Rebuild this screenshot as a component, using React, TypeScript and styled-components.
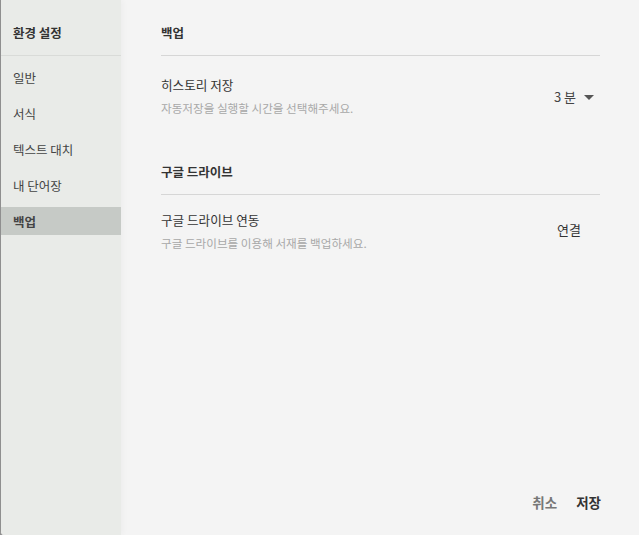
import React from "react";
import styled, { createGlobalStyle } from "styled-components";

const Global = createGlobalStyle`
  html, body { margin: 0; padding: 0; background: #8f8f8f; }
  body { font-family: "Noto Sans CJK KR", "Noto Sans", sans-serif; color: #333; }
  * { box-sizing: border-box; }
`;

const Dialog = styled.div`
  display: flex;
  width: 639px;
  height: 535px;
  background: #f4f4f4;
  border-left: 1px solid #8f8f8f;
  border-bottom-left-radius: 4px;
  overflow: hidden;
`;

const Sidebar = styled.nav`
  width: 120px;
  flex: 0 0 120px;
  background: #e9ebe8;
  display: flex;
  flex-direction: column;
  box-shadow: 2px 0 6px rgba(0, 0, 0, 0.03);
  position: relative;
  z-index: 1;
`;

const SideHeader = styled.div`
  height: 56px;
  padding: 9px 0 0 12px;
  display: flex;
  align-items: center;
  border-bottom: 1px solid #d9dbd8;
  font-size: 12.5px;
  font-weight: 700;
  color: #333;
`;

const SideList = styled.ul`
  list-style: none;
  margin: 7px 0 0;
  padding: 0;
  display: flex;
  flex-direction: column;
  gap: 8px;
`;

const SideItem = styled.li<{ $active?: boolean }>`
  height: 28px;
  display: flex;
  align-items: center;
  padding-left: 12px;
  font-size: 12.5px;
  color: #444;
  font-weight: ${(p) => (p.$active ? 700 : 400)};
  background: ${(p) => (p.$active ? "#c6cac6" : "transparent")};
`;

const Main = styled.main`
  flex: 1;
  display: flex;
  flex-direction: column;
  padding: 0 39px 0 40px;
`;

const SectionHeader = styled.div`
  height: 56px;
  padding-top: 9px;
  display: flex;
  align-items: center;
  border-bottom: 1px solid #d6d6d6;
  font-size: 12.5px;
  font-weight: 700;
  color: #333;
`;

const Row = styled.div<{ $top: number; $bottom: number }>`
  display: flex;
  align-items: center;
  justify-content: space-between;
  padding: ${(p) => p.$top}px 0 ${(p) => p.$bottom}px;
`;

const TextBlock = styled.div`
  display: flex;
  flex-direction: column;
`;

const Label = styled.div`
  font-size: 12.6px;
  line-height: 18px;
  color: #333;
`;

const Desc = styled.div`
  margin-top: 6px;
  font-size: 11.6px;
  line-height: 16px;
  color: #a8a8a8;
`;

const Select = styled.div`
  display: flex;
  align-items: center;
  gap: 8px;
  padding-right: 6px;
  font-size: 13px;
  color: #444;
`;

const Caret = styled.span`
  width: 0;
  height: 0;
  border-left: 5px solid transparent;
  border-right: 5px solid transparent;
  border-top: 5px solid #555;
  margin-top: 2px;
`;

const LinkButton = styled.button`
  background: none;
  border: none;
  padding: 0 19px 0 0;
  margin-top: -3px;
  font: inherit;
  font-size: 13px;
  color: #333;
`;

const Footer = styled.div`
  margin-top: auto;
  display: flex;
  justify-content: flex-end;
  gap: 19px;
  padding: 0 0 23px;
  margin-right: -1px;
`;

const FooterButton = styled.button<{ $primary?: boolean }>`
  background: none;
  border: none;
  padding: 0;
  font-family: inherit;
  font-size: 13.5px;
  line-height: 20px;
  font-weight: 700;
  color: ${(p) => (p.$primary ? "#333" : "#777")};
`;

const navItems = ["일반", "서식", "텍스트 대치", "내 단어장", "백업"];

export default function App() {
  return (
    <>
      <Global />
      <Dialog>
        <Sidebar>
          <SideHeader>환경 설정</SideHeader>
          <SideList>
            {navItems.map((n) => (
              <SideItem key={n} $active={n === "백업"}>
                {n}
              </SideItem>
            ))}
          </SideList>
        </Sidebar>
        <Main>
          <SectionHeader>백업</SectionHeader>
          <Row $top={20} $bottom={23}>
            <TextBlock>
              <Label>히스토리 저장</Label>
              <Desc>자동저장을 실행할 시간을 선택해주세요.</Desc>
            </TextBlock>
            <Select>
              <span>3 분</span>
              <Caret />
            </Select>
          </Row>
          <SectionHeader>구글 드라이브</SectionHeader>
          <Row $top={16} $bottom={20}>
            <TextBlock>
              <Label>구글 드라이브 연동</Label>
              <Desc>구글 드라이브를 이용해 서재를 백업하세요.</Desc>
            </TextBlock>
            <LinkButton>연결</LinkButton>
          </Row>
          <Footer>
            <FooterButton>취소</FooterButton>
            <FooterButton $primary>저장</FooterButton>
          </Footer>
        </Main>
      </Dialog>
    </>
  );
}
